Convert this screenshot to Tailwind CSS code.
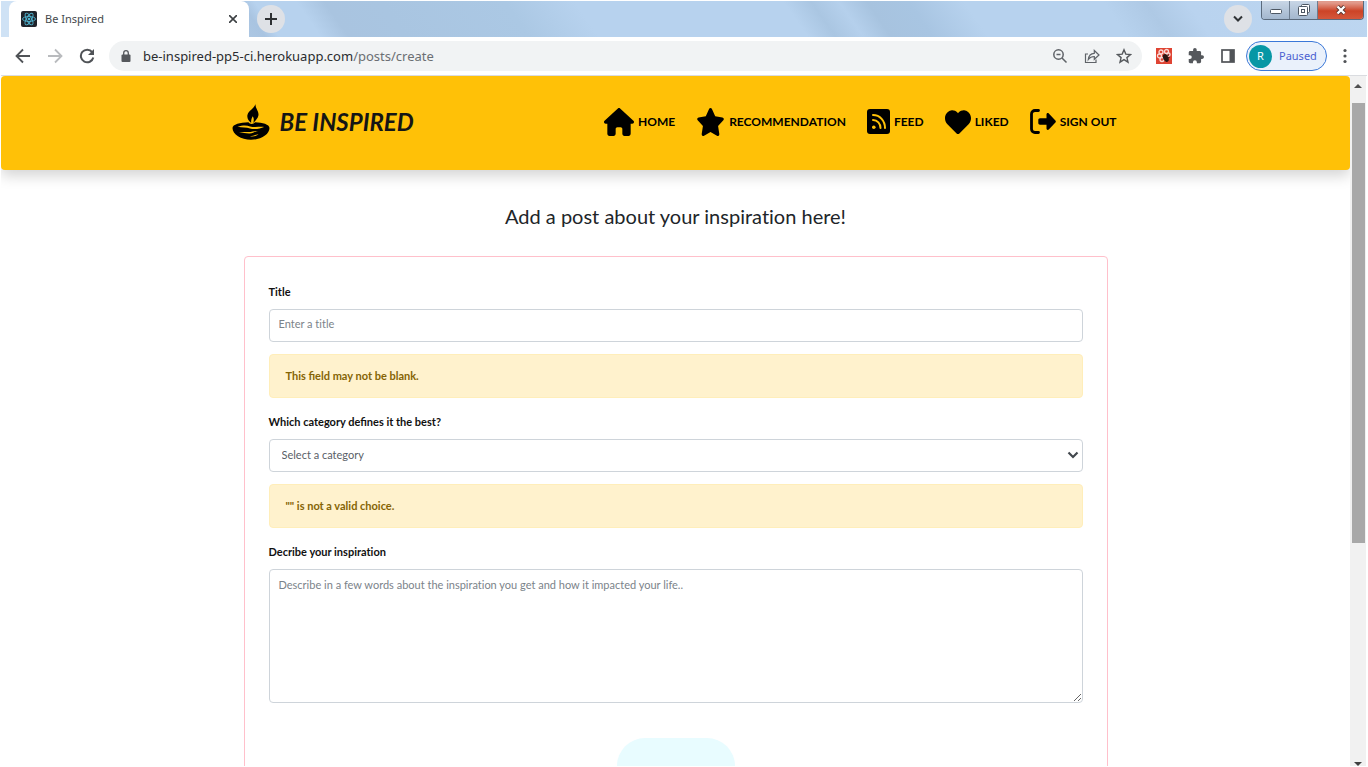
<!DOCTYPE html>
<html lang="en">
<head>
<meta charset="utf-8">
<title>Be Inspired</title>
<script src="https://cdn.jsdelivr.net/npm/@tailwindcss/browser@4"></script>
</head>
<body class="flex h-screen flex-col overflow-hidden bg-white px-px pb-px pt-px font-['Lato',sans-serif] text-[#212529]">

<!-- Tab strip -->
<div class="relative flex h-9 shrink-0 items-center bg-[linear-gradient(55deg,#cfe2f5_0%,#cfe2f5_5%,#a9c4e1_19%,#b7d2ee_20%,#b7d2ee_23%,#a9c4e0_25%,#a9c5e1_29%,#abc8e4_38%,#b7d2ee_43%,#b7d2ee_58%,#aac6e2_60%,#b5d0ec_62%,#a7c3df_64%,#a8c5e2_67%,#b7d2ee_71%,#b7d2ee_81%,#aec9e5_84%,#b9d3ef_87%,#bdd6f0_100%)] font-['Noto_Sans',sans-serif]">
  <div class="ml-2 flex h-full w-60 items-center rounded-t-lg bg-white pl-3 pr-2">
    <svg class="size-4 shrink-0" viewBox="0 0 16 16"><rect width="16" height="16" rx="2" fill="#20232a"/><g fill="none" stroke="#4fb3cf" stroke-width=".9"><ellipse cx="8" cy="8" rx="6.5" ry="2.5"/><ellipse cx="8" cy="8" rx="6.5" ry="2.5" transform="rotate(60 8 8)"/><ellipse cx="8" cy="8" rx="6.5" ry="2.5" transform="rotate(120 8 8)"/></g><circle cx="8" cy="8" r="1.3" fill="#4fb3cf"/></svg>
    <span class="ml-2 flex-1 text-[11px] text-[#45494d]">Be Inspired</span>
    <button aria-label="Close tab" class="grid size-4 place-items-center"><svg class="size-2" viewBox="0 0 8 8" stroke="#3c4043" stroke-width="1.6"><path d="M0 0l8 8M8 0L0 8"/></svg></button>
  </div>
  <button aria-label="New tab" class="ml-2 grid size-7 place-items-center rounded-full bg-[#dee1e6]"><svg class="size-3" viewBox="0 0 12 12" stroke="#2d3033" stroke-width="2"><path d="M6 0v12M0 6h12"/></svg></button>
  <button aria-label="Search tabs" class="ml-auto mr-[9px] grid size-7 place-items-center rounded-full bg-[#dee1e6]"><svg class="h-2 w-2.5" viewBox="0 0 10 8" fill="none" stroke="#303336" stroke-width="2"><path d="M1 1.500l4 4 4-4"/></svg></button>
  <div class="mr-[3px] flex h-[19px] w-[103px] self-start overflow-hidden rounded-b border border-t-0 border-[#5a6a7c]">
    <button aria-label="Minimize" class="grid w-7 place-items-center border-r border-[#6d7d8f] bg-linear-to-b from-[#c8d6e6] to-[#a3b7ce] pt-1"><svg class="h-1.5 w-3" viewBox="0 0 12 6"><rect x=".5" y=".5" width="11" height="4" rx="1" fill="#fff" stroke="#4d5763"/></svg></button>
    <button aria-label="Restore" class="grid w-7 place-items-center border-r border-[#6d7d8f] bg-linear-to-b from-[#c8d6e6] to-[#a3b7ce]"><svg class="size-3" viewBox="0 0 12 12" fill="#fff" stroke="#4d5763"><rect x="3.500" y=".5" width="8" height="8" rx="1"/><rect x=".5" y="2.500" width="9" height="9" rx="1"/><rect x="3.500" y="5.500" width="3" height="3"/></svg></button>
    <button aria-label="Close" class="grid flex-1 place-items-center bg-linear-to-b from-[#e19a8b] from-10% via-[#cc4326] via-55% to-[#d4573b]"><svg class="h-2.5 w-3" viewBox="0 0 12 10"><path d="M2.500 1.500l7 7M9.500 1.500l-7 7" stroke="#50342f" stroke-width="4"/><path d="M2.500 1.500l7 7M9.500 1.500l-7 7" stroke="#fff" stroke-width="2.400"/></svg></button>
  </div>
</div>

<!-- Toolbar -->
<div class="flex h-[39px] shrink-0 items-center border-b border-[#dadce0] bg-white font-['Noto_Sans',sans-serif]">
  <button aria-label="Back" class="ml-3.5 size-4"><svg viewBox="0 0 16 16" fill="none" stroke="#505357" stroke-width="1.800"><path d="M15 8H2M8 1.500L1.500 8 8 14.500"/></svg></button>
  <button aria-label="Forward" class="ml-4 size-4"><svg viewBox="0 0 16 16" fill="none" stroke="#b9bbbe" stroke-width="1.800"><path d="M1 8h13M8 1.500L14.500 8 8 14.500"/></svg></button>
  <button aria-label="Reload" class="ml-4 size-4"><svg viewBox="0 0 16 16"><path d="M13.200 4.200A6.300 6.300 0 1 0 14.300 9.500" fill="none" stroke="#505357" stroke-width="2"/><path d="M15 1v6H9z" fill="#505357"/></svg></button>
  <div class="ml-3.5 flex h-[30px] flex-1 items-center rounded-full bg-[#f1f3f4] pl-3 pr-2.5">
    <svg class="h-3 w-2.5 shrink-0" viewBox="0 0 10 12"><rect x=".5" y="4.500" width="9" height="7.500" rx="1" fill="#55585c"/><path d="M2.700 5V3a2.300 2.300 0 0 1 4.600 0v2" fill="none" stroke="#55585c" stroke-width="1.300"/></svg>
    <div class="ml-3 flex-1 pt-0.5 text-[13px] text-[#6b6f73]"><span class="text-[#2a2c2f]">be-inspired-pp5-ci.herokuapp.com</span>/posts/create</div>
    <div class="flex gap-4">
      <button aria-label="Zoom" class="size-4"><svg viewBox="0 0 16 16" fill="none" stroke="#5f6368" stroke-width="1.500"><circle cx="6.500" cy="6.500" r="4.700"/><path d="M10 10l4.500 4.500M4.500 6.500h4"/></svg></button>
      <button aria-label="Share" class="size-4"><svg viewBox="0 0 16 16" fill="none" stroke="#5f6368" stroke-width="1.200"><path d="M4 6H1.500v8.500h10.500v-3"/><path d="M4.300 11.500c.4-4 2.700-6 6-6.200V2.500L15 7l-4.700 4.300V8.500c-2.600 0-4.500.9-6 3z"/></svg></button>
      <button aria-label="Bookmark" class="size-4"><svg viewBox="0 0 16 16" fill="none" stroke="#55585c" stroke-width="1.400"><path d="M8 1.800l1.800 4.300 4.700.4-3.600 3.100 1.100 4.600-4-2.500-4 2.500 1.100-4.600L1.500 6.500l4.700-.4z"/></svg></button>
    </div>
  </div>
  <button aria-label="Ladybug extension" class="ml-3.5 size-4"><svg viewBox="0 0 16 16"><rect width="16" height="16" fill="#df4433"/><g fill="none" stroke="#f7dcd8" stroke-width="1.300"><circle cx="5" cy="4" r="2"/><circle cx="10.500" cy="3.500" r="2"/><circle cx="3.500" cy="8" r="2"/><circle cx="6" cy="11.500" r="2"/><circle cx="12.500" cy="6.500" r="1.600"/></g><ellipse cx="9.800" cy="10" rx="2.600" ry="4" fill="#2a1713" transform="rotate(-25 9.800 10)"/><path d="M7 8l6-1M7.500 11l6-1.500" stroke="#2a1713"/></svg></button>
  <button aria-label="Extensions" class="ml-4 size-4"><svg viewBox="1 1 22 22" fill="#55585c"><path d="M20.500 11H19V7c0-1.100-.9-2-2-2h-4V3.500a2.500 2.500 0 0 0-5 0V5H4c-1.100 0-2 .9-2 2v3.800h1.500a2.700 2.700 0 0 1 0 5.400H2V20c0 1.100.9 2 2 2h3.800v-1.500a2.700 2.700 0 0 1 5.400 0V22H17c1.100 0 2-.9 2-2v-4h1.500a2.500 2.500 0 0 0 0-5z"/></svg></button>
  <button aria-label="Side panel" class="ml-4 size-4"><svg viewBox="0 0 16 16"><rect x="2" y="2" width="12" height="12" fill="none" stroke="#505357" stroke-width="1.700"/><path d="M9.500 2H14v12H9.500z" fill="#505357"/></svg></button>
  <button class="ml-2.5 flex h-[30px] w-[81px] items-center rounded-full border border-[#3b78d8] bg-[#eaf1fb] pl-0.5 text-[11px] text-[#4a5fd0]"><span class="mr-[7px] grid size-[23px] place-items-center rounded-full bg-[#0797a5] text-white">R</span>Paused</button>
  <button aria-label="Menu" class="ml-2.5 mr-3.5 size-4"><svg viewBox="0 0 16 16" fill="#505357"><circle cx="8" cy="2.500" r="1.600"/><circle cx="8" cy="8" r="1.600"/><circle cx="8" cy="13.500" r="1.600"/></svg></button>
</div>

<!-- Page -->
<div class="flex min-h-0 flex-1">
  <div class="flex-1 overflow-hidden">
    <nav class="h-[94px] rounded bg-[#ffc107] shadow-[0_6px_14px_rgba(0,0,0,0.17)]">
      <div class="mx-auto flex h-[91px] max-w-[888px] items-center justify-between pr-[3px] text-black">
        <a href="#" class="flex items-center gap-2.5 text-[24px] font-bold italic text-[#151515]">
          <svg class="h-9 w-[38px]" viewBox="0 0 38 36"><path d="M23.500 0c-.3 4.500 3.700 7 2.900 11.500-.6 3.200-3 5-5.100 7.500.8-3 .6-5-.5-6.800-1.200 2-1.900 3.800-1.600 6.800-2.700-2.200-4.500-4.800-3.700-8.300C16.600 6.500 21.800 5 23.500 0z"/><path fill-rule="evenodd" d="M16.500 18.300C8 18.400.6 20.500.5 24 .4 30.500 9 35.800 19 35.800S37.600 30.500 37.500 24c-.1-3.500-7-5.600-14.500-5.700-.8 1-2 1.600-3.300 1.600s-2.400-.6-3.200-1.600zM5.500 22.800c5-1.700 9.500-1.600 12.500-.4 3.500 1.200 8 .3 14 .5-3.500 1.900-10 2.800-14 1.500-3.600-1.200-8-.7-12.500-1.600zM7 28.300c3-.6 6-.3 9.500-.2 4 0 6-1.700 9.500-1-3.500.5-5 2.700-9 2.400-3.500-.3-6-.8-10-1.200zM18 32.200c3-.2 5.500-1.600 8.500-2-2 1.700-5 2.700-8.500 2z"/></svg>
          <span>BE INSPIRED</span>
        </a>
        <div class="flex items-center gap-[21px] text-[12px] font-bold">
          <a href="#" class="flex items-center gap-1"><svg class="h-7 w-[30px]" viewBox="0 0 576 512" preserveAspectRatio="none"><path d="M575.8 255.500c0 18-15 32.100-32 32.100h-32l.7 160.200c0 2.700-.2 5.400-.5 8.100V472c0 22.100-17.900 40-40 40H456c-1.100 0-2.200 0-3.300-.1c-1.400 .1-2.800 .1-4.200 .1H416 392c-22.100 0-40-17.900-40-40V448 384c0-17.700-14.300-32-32-32H256c-17.700 0-32 14.300-32 32v64 24c0 22.100-17.900 40-40 40H160 128.100c-1.500 0-3-.1-4.500-.2c-1.200 .1-2.400 .2-3.600 .2H104c-22.100 0-40-17.900-40-40V360c0-.9 0-1.900 .1-2.800V287.600H32c-18 0-32-14-32-32.100c0-9 3-17 10-24L266.400 8c7-7 15-8 22-8s15 2 21 7L564.800 231.500c8 7 12 15 11 24z"/></svg>HOME</a>
          <a href="#" class="flex items-center gap-1"><svg class="h-7 w-[29px]" viewBox="0 0 576 512" preserveAspectRatio="none"><path d="M316.900 18C311.600 7 300.400 0 288.100 0s-23.400 7-28.800 18L195 150.300 51.400 171.500c-12 1.800-22 10.200-25.700 21.700s-.7 24.200 7.900 32.700L137.800 329 113.200 474.700c-2 12 3 24.200 12.900 31.300s23 8 33.800 2.300l128.300-68.500 128.300 68.500c10.800 5.700 23.900 4.900 33.800-2.300s14.900-19.300 12.900-31.300L438.500 329 542.700 225.900c8.600-8.500 11.700-21.200 7.900-32.700s-13.700-19.900-25.700-21.700L381.200 150.300 316.900 18z"/></svg>RECOMMENDATION</a>
          <a href="#" class="flex items-center gap-1"><svg class="h-[25px] w-[23px]" viewBox="0 0 23 25"><rect width="23" height="25" rx="3"/><g fill="none" stroke="#ffc107" stroke-width="2" stroke-linecap="round"><path d="M6 6c7 0 12 5.800 12 13M6 11c4.400 0 7.500 3.500 7.500 8"/></g><circle cx="6.800" cy="18.200" r="1.800" fill="#ffc107"/></svg>FEED</a>
          <a href="#" class="flex items-center gap-1"><svg class="h-6 w-[26px]" viewBox="0 36 512 444" preserveAspectRatio="none"><path d="M47.600 300.400L228.300 469.100c7.500 7 17.400 10.900 27.700 10.900s20.200-3.900 27.700-10.900L464.400 300.400c30.400-28.300 47.600-68 47.600-109.500v-5.800c0-69.900-50.500-129.500-119.400-141C347 36.500 300.600 51.400 268 84L256 96 244 84c-32.600-32.600-79-47.500-124.600-39.900C50.500 55.600 0 115.200 0 185.100v5.800c0 41.500 17.200 81.200 47.600 109.500z"/></svg>LIKED</a>
          <a href="#" class="flex items-center gap-1"><svg class="h-[25px] w-[26px]" viewBox="0 0 26 25"><path d="M8.500 1.500H5A3.500 3.500 0 0 0 1.500 5v15A3.500 3.500 0 0 0 5 23.500h3.500" fill="none" stroke="#000" stroke-width="2.800" stroke-linecap="round"/><path d="M10 9.300h6.500V5.500c0-1.400 1.300-1.900 2.300-1l6.600 6.900c.6.600.6 1.600 0 2.200l-6.600 6.900c-1 .9-2.300.4-2.300-1v-3.800H10c-1 0-1.700-.7-1.700-1.700v-3c0-1 .7-1.700 1.700-1.700z"/></svg>SIGN OUT</a>
        </div>
      </div>
    </nav>

    <main class="mx-auto max-w-[864px] pt-[31px] text-[11px] leading-5">
      <h1 class="mb-[25px] text-center text-[20px] leading-[30px] [font-variant-ligatures:no-common-ligatures]">Add a post about your inspiration here!</h1>
      <form class="flex flex-col rounded border border-[#ffc0cb] px-6 pb-12 pt-[25px]">
        <label for="title" class="mb-[7px] font-bold text-[#111]">Title</label>
        <input id="title" type="text" placeholder="Enter a title" class="h-[33px] rounded border border-[#ced4da] px-[9px] pb-1 [font-variant-ligatures:no-common-ligatures] placeholder:text-[#7b838a]">
        <div role="alert" class="mb-3.5 mt-3 flex h-11 items-center rounded border border-[#ffeeba] bg-[#fff2cd] px-4 font-bold text-[#856404]">This field may not be blank.</div>
        <label for="category" class="mb-[7px] font-bold text-[#111]">Which category defines it the best?</label>
        <div class="relative">
          <select id="category" class="h-[33px] w-full appearance-none rounded border border-[#ced4da] bg-white pb-0.5 pl-3 pr-8 text-[#596067]"><option>Select a category</option></select>
          <svg class="pointer-events-none absolute right-1 top-3 h-2 w-3" viewBox="0 0 12 8" fill="none" stroke="#42484e" stroke-width="2.200"><path d="M1.500 1.500L6 6l4.500-4.500"/></svg>
        </div>
        <div role="alert" class="mb-3.5 mt-3 flex h-11 items-center rounded border border-[#ffeeba] bg-[#fff2cd] px-4 font-bold text-[#856404]">"" is not a valid choice.</div>
        <label for="description" class="mb-[7px] font-bold text-[#111] [font-variant-ligatures:no-common-ligatures]">Decribe your inspiration</label>
        <textarea id="description" placeholder="Describe in a few words about the inspiration you get and how it impacted your life.." class="h-[134px] resize rounded border border-[#ced4da] px-[9px] py-[5px] [font-variant-ligatures:no-common-ligatures] placeholder:text-[#7b838a]"></textarea>
        <button type="submit" aria-label="Create" class="mt-[35px] h-14 w-[118px] self-center rounded-[28px] bg-[#e8fcff]"></button>
      </form>
    </main>
  </div>

  <!-- Scrollbar -->
  <div class="mr-px flex w-4 shrink-0 flex-col items-center overflow-hidden bg-[#f1f1f1]">
    <svg class="mb-[15px] mt-2 h-1 w-2 shrink-0" viewBox="0 0 8 4" fill="#505050"><path d="M4 0l4 4H0z"/></svg>
    <div class="h-[440px] w-[13px] shrink-0 bg-[#a8a8a8]"></div>
    <svg class="mt-auto h-1 w-2 shrink-0" viewBox="0 0 8 4" fill="#404040"><path d="M0 0h8L4 4z"/></svg>
  </div>
</div>
</body>
</html>
